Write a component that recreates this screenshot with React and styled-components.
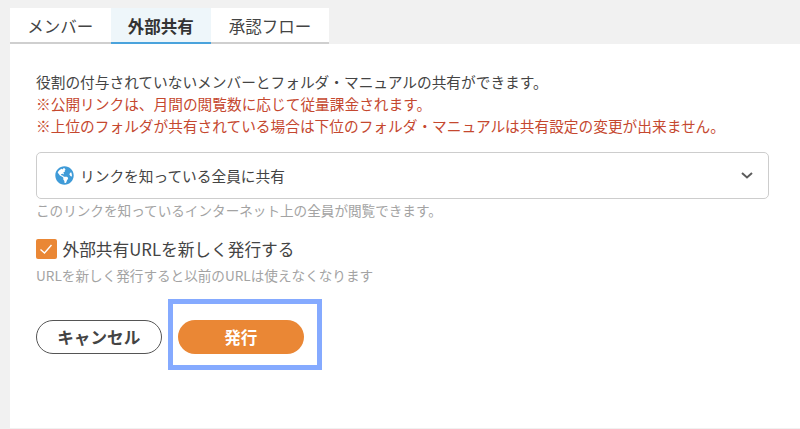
import React from 'react'
import styled, { createGlobalStyle } from 'styled-components'
import { FaGlobeAmericas } from 'react-icons/fa'

const GlobalStyle = createGlobalStyle`
  html, body {
    margin: 0;
    padding: 0;
    background: #f1f1f1;
  }
  body {
    font-family: "Noto Sans CJK JP", "Noto Sans", sans-serif;
    color: #444;
  }
`

const App = () => {
  return (
    <>
      <GlobalStyle />
      <Page>
        <Tabs>
          <Tab>メンバー</Tab>
          <Tab active>外部共有</Tab>
          <Tab wide>承認フロー</Tab>
        </Tabs>
        <Panel>
          <Intro>
            <p>役割の付与されていないメンバーとフォルダ・マニュアルの共有ができます。</p>
            <Warn>※公開リンクは、月間の閲覧数に応じて従量課金されます。</Warn>
            <Warn>※上位のフォルダが共有されている場合は下位のフォルダ・マニュアルは共有設定の変更が出来ません。</Warn>
          </Intro>
          <Select>
            <SelectLabel>
              <FaGlobeAmericas size={19} color="#3f9bd8" />
              リンクを知っている全員に共有
            </SelectLabel>
            <svg width="12" height="7" viewBox="0 0 12 7" fill="none">
              <path d="M1 1 L6 5.5 L11 1" stroke="#5c5c5c" strokeWidth="2" />
            </svg>
          </Select>
          <Hint>このリンクを知っているインターネット上の全員が閲覧できます。</Hint>
          <CheckRow>
            <CheckBox>
              <svg width="14" height="14" viewBox="0 0 14 14" fill="none">
                <path d="M1.5 7.5 L5.5 11 L12.5 3" stroke="#fff" strokeWidth="1.4" />
              </svg>
            </CheckBox>
            外部共有URLを新しく発行する
          </CheckRow>
          <Hint second>URLを新しく発行すると以前のURLは使えなくなります</Hint>
          <Actions>
            <CancelButton>キャンセル</CancelButton>
            <SubmitWrap>
              <SubmitButton>発行</SubmitButton>
              <Highlight />
            </SubmitWrap>
          </Actions>
        </Panel>
      </Page>
    </>
  )
}

export default App

const Page = styled.div`
  width: 800px;
  height: 429px;
  padding: 8px 0 1px 10px;
  box-sizing: border-box;
  display: flex;
  flex-direction: column;
  overflow: hidden;
`
const Tabs = styled.div`
  display: flex;
  width: 319px;
  height: 36px;
  background: #fff;
`
const Tab = styled.div`
  width: ${(p) => (p.wide ? '118px' : '100.5px')};
  box-sizing: border-box;
  display: flex;
  align-items: center;
  justify-content: center;
  padding-top: 1px;
  font-size: 16.5px;
  font-weight: ${(p) => (p.active ? 700 : 400)};
  color: ${(p) => (p.active ? '#333' : '#444')};
  background: ${(p) => (p.active ? '#eef6fa' : '#fff')};
  border-bottom: 2px solid ${(p) => (p.active ? '#4aa3dc' : '#cfcfcf')};
`
const Panel = styled.div`
  flex: 1;
  background: #fff;
  padding: 27px 0 0 26px;
`
const Intro = styled.div`
  font-size: 14.7px;
  line-height: 22px;
  p {
    margin: 0;
  }
`
const Warn = styled.p`
  color: #c5482f;
`
const Select = styled.div`
  margin-top: 15px;
  width: 732.5px;
  height: 47px;
  box-sizing: border-box;
  border: 1px solid #cdcdcd;
  border-radius: 5px;
  display: flex;
  align-items: center;
  justify-content: space-between;
  padding: 0 15px 0 18px;
`
const SelectLabel = styled.div`
  display: flex;
  align-items: center;
  gap: 6px;
  font-size: 14.7px;
`
const Hint = styled.div`
  margin-top: ${(p) => (p.second ? '5px' : '1px')};
  font-size: 13.6px;
  line-height: 20px;
  color: #a3a3a3;
`
const CheckRow = styled.div`
  margin-top: 18px;
  display: flex;
  align-items: center;
  gap: 6px;
  font-size: 16.7px;
  line-height: 22px;
`
const CheckBox = styled.div`
  width: 20.5px;
  height: 20.5px;
  border-radius: 2px;
  background: #ea8735;
  display: flex;
  align-items: center;
  justify-content: center;
`
const Actions = styled.div`
  margin-top: 35px;
  display: flex;
  gap: 16.5px;
`
const CancelButton = styled.button`
  width: 125.5px;
  height: 33.5px;
  box-sizing: border-box;
  border: 1px solid #555;
  border-radius: 17px;
  background: #fff;
  color: #444;
  font: 700 16.6px "Noto Sans CJK JP", sans-serif;
  padding: 0;
`
const SubmitWrap = styled.div`
  position: relative;
`
const SubmitButton = styled.button`
  width: 125.5px;
  height: 33.5px;
  border: 0;
  border-radius: 17px;
  background: #ea8735;
  color: #fff;
  font: 700 16.6px "Noto Sans CJK JP", sans-serif;
  padding: 0;
  display: block;
`
const Highlight = styled.div`
  position: absolute;
  inset: -21px -18px -16.5px -10px;
  border: 5px solid #85aaff;
`
